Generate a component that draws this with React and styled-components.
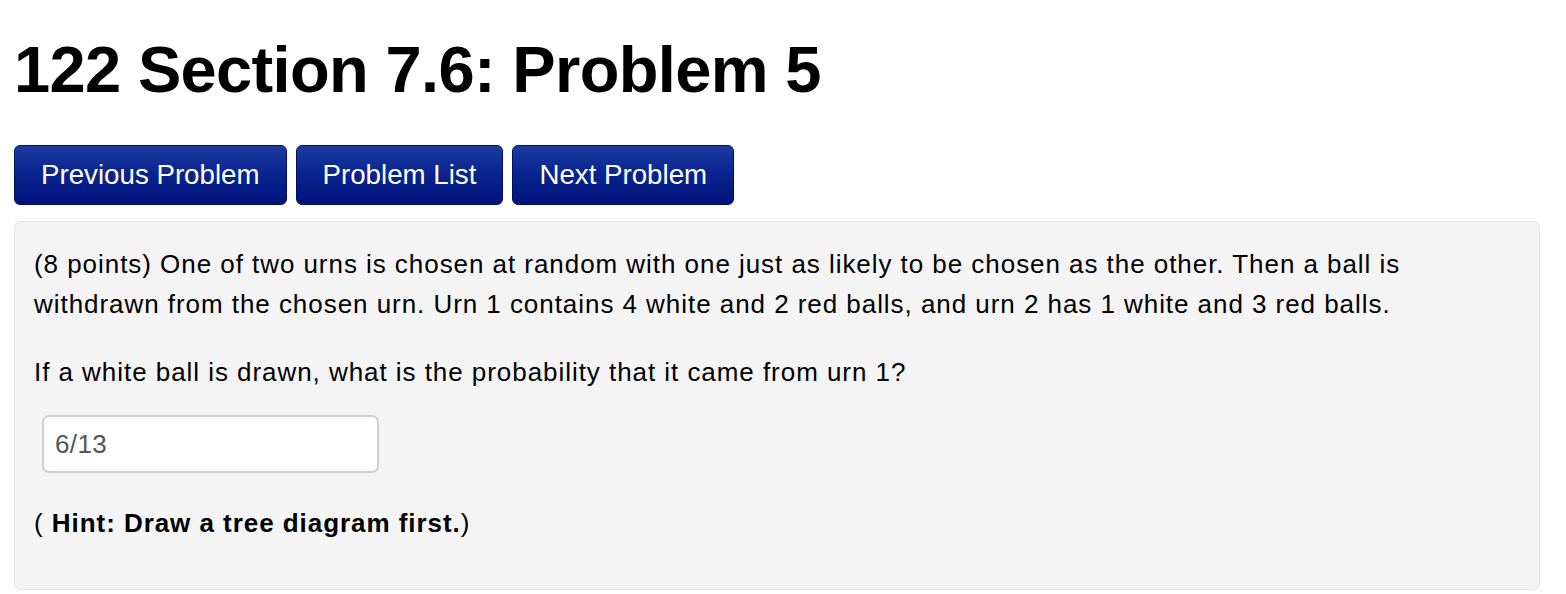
import styled, { createGlobalStyle } from 'styled-components'

const GlobalStyle = createGlobalStyle`
  body {
    margin: 0;
    background: #fff;
    color: #000;
    font-family: "Liberation Sans", Arial, Helvetica, sans-serif;
  }
`

const Page = styled.div`
  padding: 0 26px 0 14px;
`

const Title = styled.h1`
  margin: 33px 0 39px 0;
  font-size: 65px;
  line-height: 73px;
  font-weight: 700;
  letter-spacing: -0.65px;
`

const NavBar = styled.div`
  display: flex;
  gap: 9px;
  margin-bottom: 16px;
`

const NavButton = styled.button`
  height: 60px;
  padding: 0 26px;
  border: 1px solid #00105e;
  border-radius: 6px;
  background: linear-gradient(to bottom, #1d3b9f 0%, #0a2590 45%, #00137c 100%);
  color: #fff;
  font-family: inherit;
  font-size: 27.7px;
  cursor: pointer;
`

const Panel = styled.div`
  border: 1px solid #e3e3e3;
  border-radius: 6px;
  background: #f4f4f4;
  padding: 22px 19px 46px 19px;
  font-size: 26px;
  line-height: 40px;
  letter-spacing: 0.95px;
`

const Para = styled.p`
  margin: 0 0 28px 0;
`

const AnswerInput = styled.input`
  display: block;
  box-sizing: border-box;
  width: 337px;
  height: 58px;
  margin: -5px 0 30px 8px;
  padding: 0 11px;
  border: 2px solid #cfcfcf;
  border-radius: 7px;
  background: #fff;
  color: #555;
  font-family: inherit;
  font-size: 26px;
  letter-spacing: 0.4px;
  outline: none;
`

const Hint = styled.div`
  margin: 0;
`

export default function App() {
  return (
    <Page>
      <GlobalStyle />
      <Title>122 Section 7.6: Problem 5</Title>
      <NavBar>
        <NavButton>Previous Problem</NavButton>
        <NavButton>Problem List</NavButton>
        <NavButton>Next Problem</NavButton>
      </NavBar>
      <Panel>
        <Para>
          (8 points) One of two urns is chosen at random with one just as likely to be chosen as the other. Then a ball is
          <br />
          withdrawn from the chosen urn. Urn 1 contains 4 white and 2 red balls, and urn 2 has 1 white and 3 red balls.
        </Para>
        <Para>If a white ball is drawn, what is the probability that it came from urn 1?</Para>
        <AnswerInput defaultValue="6/13" />
        <Hint>
          ( <b>Hint: Draw a tree diagram first.</b>)
        </Hint>
      </Panel>
    </Page>
  )
}
